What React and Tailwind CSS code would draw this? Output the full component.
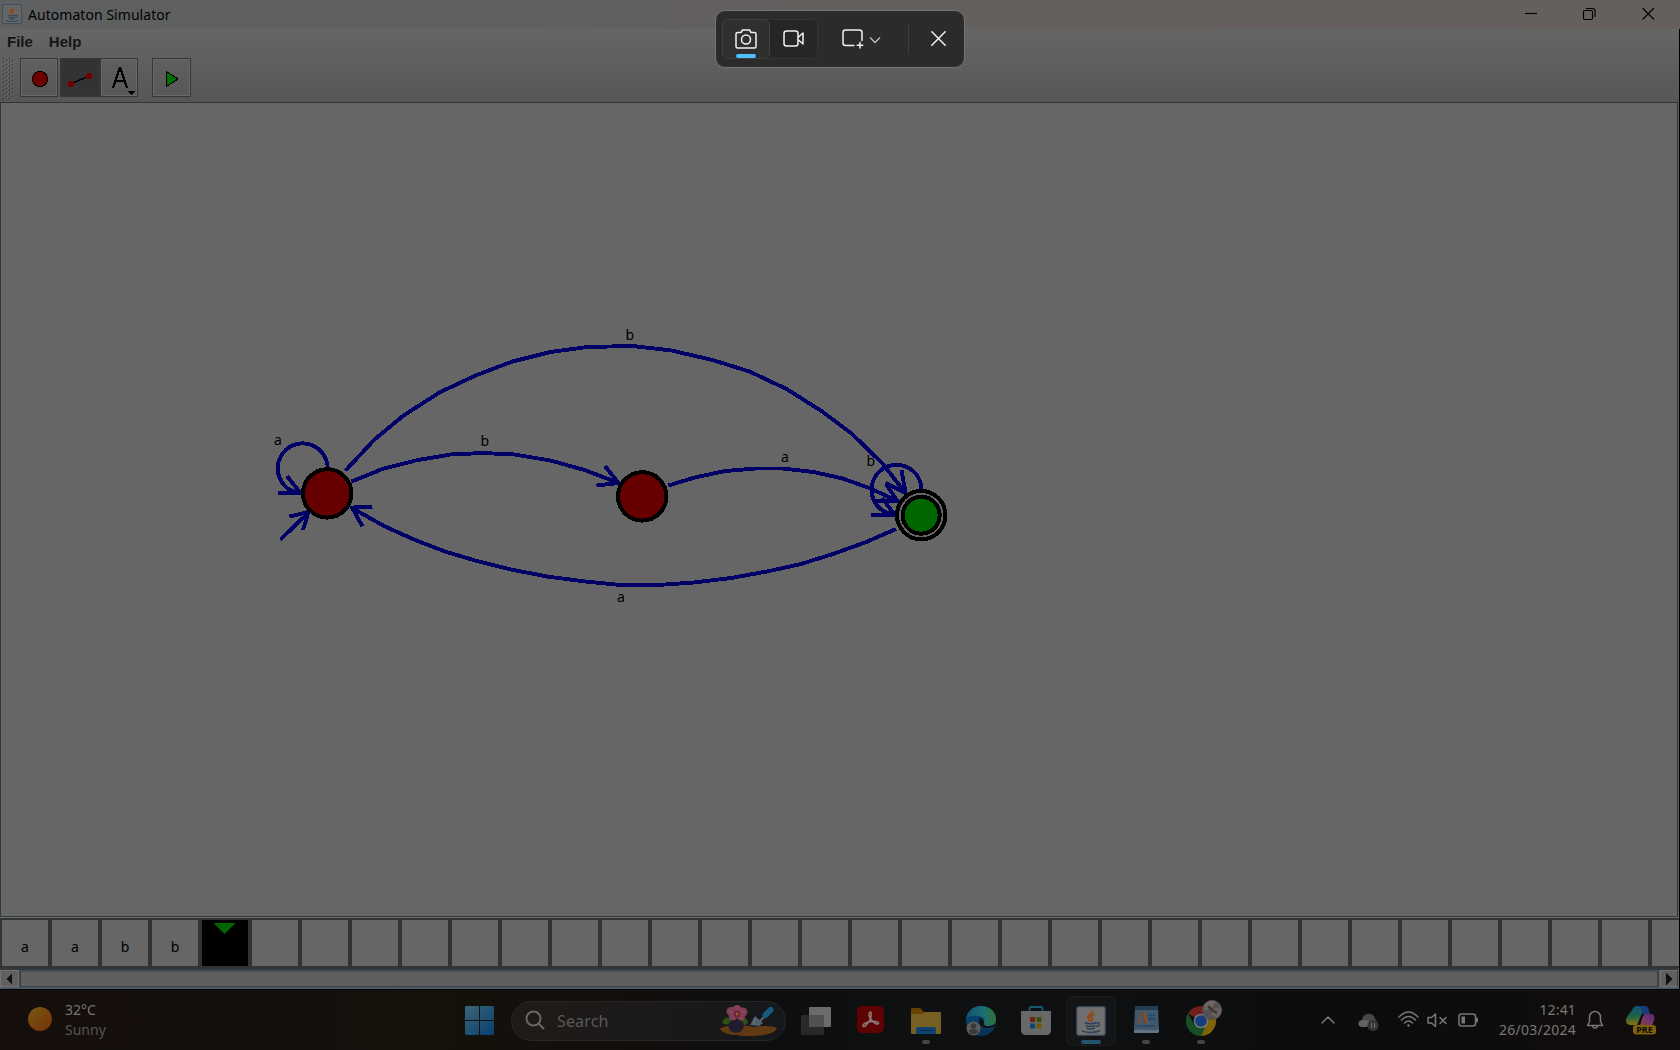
import React from "react";

const INK = "#000066";

const CURVES = [
  "345.5,470.5 374.5,439.5 403.5,415.5 439.5,392.5 475.5,375.5 512.5,361.5 550.5,352 587.5,347 632.5,346 671.5,350.5 712.5,360 749.5,371.5 786.5,389 821.5,411 851.5,433.5 882.5,463.5 905.5,493",
  "351.5,481.5 382.5,469 415.5,460.5 450.5,454.5 482.5,453 514.5,454.5 550.5,460.5 584.5,470 618.5,483",
  "668.5,485.5 696.5,477 725.5,471 755.5,468.5 782.5,468.5 813.5,472 842.5,478.5 870.5,488.5 897.5,501",
  "896,529 865,542.5 833,554 801,564 767,571.5 731,578 694,582.5 658,585 620,585 585,581.5 547,576.5 511,569.5 477,561 445,551.5 415,540 385,526.5 351,507.5",
];

const HEADS = [
  "605,466 618.5,483 596.5,485.5",
  "901.5,470 905.5,493 885.5,483",
  "886,484 897.5,501 875,501",
  "372.5,507 352,507.5 362.5,526.5",
  "278,493 300.5,493 287,476",
  "871,515 895,515 882,498",
  "289.5,516.5 308.5,512 303,530",
];

const LABELS = [
  ["b", 625.5, 340],
  ["a", 274, 445],
  ["b", 480.5, 446],
  ["a", 781, 462],
  ["b", 866.5, 466],
  ["a", 617, 602],
];

function Automaton() {
  return (
    <svg className="block" width="1676" height="813" viewBox="1 103 1676 813">
      <g fill="none" stroke={INK} strokeWidth="3.9" shapeRendering="crispEdges">
        {CURVES.map((p) => <polyline key={p} points={p} />)}
        {HEADS.map((p) => <polyline key={p} points={p} />)}
        <path d="M327.7 469A25 25 0 1 0 292 491L300 493" />
        <path d="M921.5 490A25 25 0 1 0 885 512L895 515" />
        <path d="M280.5 539.5L309 512" />
      </g>
      <g stroke="#000" strokeWidth="4" shapeRendering="crispEdges">
        <circle cx="327.2" cy="493.4" r="24.2" fill="#660000" />
        <circle cx="642.2" cy="496.4" r="24.2" fill="#660000" />
        <circle cx="921.2" cy="515.2" r="24.200" fill="#666666" />
        <circle cx="921.2" cy="515.2" r="18.500" fill="#006600" />
      </g>
      <g fontFamily="'Noto Sans', sans-serif" fontSize="14" fill="#000">
        {LABELS.map(([t, x, y]) => <text key={x} x={x} y={y}>{t}</text>)}
      </g>
    </svg>
  );
}

function JavaCup({ size, dim }) {
  return (
    <svg width={size} height={size} viewBox="0 0 30 30" className="block shrink-0">
      <rect x=".7" y=".7" width="28.6" height="28.6" rx="2" fill={dim ? "#666" : "#707070"} stroke="#34485a" strokeWidth="1.2" />
      <path d="M15.5 5c2 3-4.500 4-3.500 6.500 .4 1.600 2 2.500 2 4M18.500 8c-3.500 1.500-4.500 2.500-2.700 4.500 1 1.300 .2 2-.8 3" fill="none" stroke="#944512" strokeWidth="1.900" />
      <path d="M8.500 16.500c3 1.500 9 1.500 12 0M20.500 17c4-1.500 4 3-.5 3.500M9.500 19.500c3 1.300 7 1.300 10 0M10.500 22c2.500 1.200 6 1.200 8.500 0M6 24.500c3 2.500 14 2.500 18 0" fill="none" stroke="#2c4159" strokeWidth="1.500" />
    </svg>
  );
}

function TitleBar() {
  return (
    <div className="flex h-[29px] items-center bg-linear-to-r from-[#5e6061] via-[#64605e] via-60% to-[#655f5e] pl-[2px]">
      <div className="-mt-[2px]"><JavaCup size={20} dim /></div>
      <span className="ml-[6px] text-[14px] leading-[20px] tracking-[0.05px] text-black">Automaton Simulator</span>
      <svg className="-mt-[1px] ml-auto mr-[24px] block" width="132" height="16" viewBox="0 0 132 16" fill="none" stroke="#000" strokeWidth="1.100">
        <path d="M1 7.500H13" />
        <rect x="59.500" y="4.500" width="9" height="9" rx="1.200" />
        <path d="M62 2.500h6.500a2.500 2.500 0 0 1 2.500 2.500v6M118.500 2l11.500 11.500M130 2l-11.500 11.500" />
      </svg>
    </div>
  );
}

function ToolButton({ children, className }) {
  return <div className={`flex h-[39px] items-center justify-center border border-[#363636] ${className}`}>{children}</div>;
}

function Header() {
  return (
    <div className="flex h-[73px] flex-col bg-linear-to-b from-[#666666] to-[#565656]">
      <div className="flex h-[27px] items-center gap-[16px] pl-[7px] pb-[1px] font-['Liberation_Sans'] text-[15px] font-bold text-[#151515]">
        <span>File</span>
        <span>Help</span>
      </div>
      <div className="flex pt-[2px] pl-[2px]">
        <svg className="mr-[5px]" width="13" height="41" shapeRendering="crispEdges">
          <defs>
            <pattern id="grip" width="6" height="4" patternUnits="userSpaceOnUse">
              <path d="M1 0h1v1H1zM4 2h1v1H4z" fill="#2a2a2a" />
              <path d="M2 1h1v1H2zM5 3h1v1H5z" fill="#6c6c6c" />
            </pattern>
          </defs>
          <rect width="13" height="41" fill="url(#grip)" />
        </svg>
        <ToolButton className="w-[38px] shadow-[inset_0_0_0_1px_#686868]">
          <svg width="18" height="18" viewBox="0 0 18 18" shapeRendering="crispEdges" className="ml-[2px] mt-[2px]"><circle cx="9" cy="9" r="7.700" fill="#700000" stroke="#000" /></svg>
        </ToolButton>
        <ToolButton className="ml-[2px] w-[40px] border-2 border-[#2c2c2c] bg-[#333333]">
          <svg width="26" height="18" viewBox="0 0 26 18" shapeRendering="crispEdges" className="mt-[4px]">
            <path d="M3.500 13L22 5" stroke="#000" strokeWidth="1.400" />
            <circle cx="4" cy="13" r="3" fill="#700000" /><circle cx="22" cy="5" r="3" fill="#700000" />
          </svg>
        </ToolButton>
        <ToolButton className="w-[38px] shadow-[inset_0_0_0_1px_#686868]">
          <svg width="34" height="35" viewBox="0 0 34 35" shapeRendering="crispEdges">
            <path d="M11 28L17.500 8.500h1L25 28M13.500 21H23" fill="none" stroke="#000" strokeWidth="2.400" />
            <path d="M25 31h9l-4.500 4z" fill="#000" />
          </svg>
        </ToolButton>
        <ToolButton className="ml-[14px] w-[39px] shadow-[inset_0_0_0_1px_#686868]">
          <svg width="14" height="18" viewBox="0 0 14 18" shapeRendering="crispEdges" className="ml-[1px] mt-[2px]"><path d="M1.500 1.500v15L13 9z" fill="#007000" stroke="#000" /></svg>
        </ToolButton>
      </div>
    </div>
  );
}

const CELLS = Array.from({ length: 34 }, (_, i) => ["a", "a", "b", "b"][i] || "");

function Tape() {
  return (
    <div className="flex h-[50px] w-[1679px] gap-[4px] overflow-hidden bg-[#333333] pl-[2px] pt-[2px]">
      {CELLS.map((c, i) =>
        i === 4 ? (
          <div key={i} className="flex h-[46px] w-[46px] shrink-0 justify-center bg-black pr-[2px] pt-[3px]">
            <svg width="22" height="12" viewBox="0 0 22 12" shapeRendering="crispEdges"><path d="M0 0h22L11 11z" fill="#006600" /></svg>
          </div>
        ) : (
          <div key={i} className="h-[46px] w-[46px] shrink-0 bg-[#666666] pt-[17px] text-center text-[14px] leading-[19px] text-black">{c}</div>
        )
      )}
    </div>
  );
}

function ScrollBar() {
  return (
    <div className="flex h-[21px] w-[1678px] border-t-2 border-b-[2px] border-t-[#33383d] border-b-[#505a66] bg-[#5f5f5f]">
      <div className="flex w-[19px] items-center justify-center border border-[#737373] bg-[#606060] pr-[1px]">
        <svg width="6" height="12" viewBox="0 0 6 12" shapeRendering="crispEdges"><path d="M6 0v12L0 6z" fill="#111" /></svg>
      </div>
      <div className="mr-[1px] flex-1 border-2 border-b border-[#3b4148] border-t-[#454e59] border-l-[#3b4148]" />
      <div className="flex w-[18px] items-center justify-center border border-[#737373] border-r-[#3b4148] bg-[#606060]">
        <svg width="6" height="12" viewBox="0 0 6 12" shapeRendering="crispEdges"><path d="M0 0v12L6 6z" fill="#111" /></svg>
      </div>
    </div>
  );
}

function StartIcon() {
  return (
    <svg width="29" height="29" viewBox="0 0 29 29" className="block">
      <defs><linearGradient id="win" x1="0" y1="0" x2="1" y2="1"><stop stopColor="#3b6676" /><stop offset="1" stopColor="#063f70" /></linearGradient></defs>
      <path d="M1 0h13v14H0V1zM15 0h13l1 1v13H15zM0 15h14v14H1L0 28zM15 15h14v13l-1 1H15z" fill="url(#win)" />
    </svg>
  );
}

function GardenArt() {
  return (
    <svg width="60" height="32" viewBox="0 0 60 32" className="block">
      <path d="M1 24c3-4 24-5 34-2 8-2 20-1 23 1-2 6-15 8-28 8S3 29 1 24z" fill="#613a13" />
      <path d="M3 18c2-7 8-7 10-1-2 3-7 3-10 1zM21 17c2-6 6-5 8 0-1 4-6 4-8 0z" fill="#315019" />
      <path d="M11 16h12c4 5 0 10-2 11-3 1-6 1-8 0-3-2-5-6-2-11z" fill="#211d2e" />
      <g fill="#7d3f53">
        <circle cx="12" cy="6.500" r="4.500" /><circle cx="18" cy="4.500" r="4.500" /><circle cx="24" cy="7" r="4.500" /><circle cx="14" cy="11.500" r="4" /><circle cx="22" cy="11.500" r="4" />
      </g>
      <g stroke="#8f5566" strokeWidth=".8"><path d="M18 9l-8-3M18 9V1M18 9l8-3M18 9l-5 5M18 9l5 5" /></g>
      <circle cx="18" cy="9" r="3.500" fill="#712238" /><circle cx="18" cy="9" r="1.400" fill="#8d642c" />
      <path d="M36 11l8 7-4 3-9-1z" fill="#536069" /><path d="M36 13l-2 6" stroke="#6f7a80" /><path d="M41 16l7-7" stroke="#59666e" strokeWidth="2" />
      <path d="M46.500 10l5-5" stroke="#165a80" strokeWidth="6" strokeLinecap="round" />
    </svg>
  );
}

function TaskViewIcon() {
  return <svg width="30" height="28" viewBox="0 0 30 28"><rect y="8" width="23" height="20" rx="1.500" fill="#292929" /><rect x="8" width="22" height="20" rx="1" fill="#6b6b6b" /><path d="M8 8h15v12H8z" fill="#505050" /></svg>;
}

function AcrobatIcon() {
  return (
    <svg width="27" height="27" viewBox="0 0 27 27" className="mr-[1px]">
      <rect width="27" height="27" rx="5" fill="#5e0202" />
      <path d="M12.500 6.500c2.500-2.500 2 4.500 0 8-2.500 4.500-6.500 8-6.500 5 0-2.500 9-5 13-4 4.500 1 2.500 3.500-.5 2-4-2-7.500-7-6-11z" fill="none" stroke="#8d7d7d" strokeWidth="1.500" />
    </svg>
  );
}

function FolderIcon() {
  return (
    <svg width="30" height="27" viewBox="0 0 30 27">
      <path d="M0 1q0-1 1-1h8l4 4h16v8H0z" fill="#654400" />
      <path d="M0 6h11l3-2h15q1 0 1 1v20q0 1-1 1H1q-1 0-1-1z" fill="#776021" />
      <path d="M5 26v-5q0-2 2-2h16q2 0 2 2v5z" fill="#0c4471" /><path d="M9 22.500h12" stroke="#082b4c" />
    </svg>
  );
}

function EdgeIcon() {
  return (
    <svg width="30" height="30" viewBox="0 0 30 30">
      <defs><linearGradient id="edg"><stop stopColor="#14527a" /><stop offset=".6" stopColor="#1c6f71" /><stop offset="1" stopColor="#327038" /></linearGradient></defs>
      <circle cx="15" cy="15" r="15" fill="#083f6b" />
      <path d="M0 14C1 5 7 0 15 0c9 0 15 6 15 13 0 5-4 7-8 7-3 0-5-1-4-3 2-3-1-7-6-7C6 9 2 10 0 14z" fill="url(#edg)" />
      <path d="M12 17c0 5 5 7 10 6 3 0 5-2 6-2-3 6-9 9-13 9-5-2-6-8-3-13z" fill="#0a3156" />
      <path d="M14 12c4 1 4 4 4 6 1 3 6 3 11 0v2c-5 3-11 3-14 0-2-2-3-5-1-8z" fill="#101214" />
      <circle cx="7.500" cy="22.500" r="7" fill="#5c5c5c" /><circle cx="7.500" cy="20" r="2.800" fill="#3a3a3a" /><path d="M3 26c0-4 9-4 9 0-2 3-7 3-9 0z" fill="#3a3a3a" />
    </svg>
  );
}

function StoreIcon() {
  return (
    <svg width="30" height="30" viewBox="0 0 30 30">
      <path d="M8.500 6V2q0-1 1-1h11q1 0 1 1v4" fill="none" stroke="#155673" strokeWidth="1.800" />
      <path d="M1 5h28q1 0 1 1v18q0 5-5 5H5q-5 0-5-5V6q0-1 1-1z" fill="#686868" />
      <path d="M9 11h5v5H9z" fill="#742313" /><path d="M15.500 11h5v5h-5z" fill="#355007" /><path d="M9 17.500h5v5H9z" fill="#05486a" /><path d="M15.500 17.500h5v5h-5z" fill="#765305" />
    </svg>
  );
}

function WordpadIcon() {
  return (
    <svg width="26" height="28" viewBox="0 0 26 28" className="ml-[1px]">
      <path d="M1 1h23l1 24q0 2-2 2H1q-1 0-1-2z" fill="#41586a" /><path d="M1 0h23v4H1z" fill="#203e52" /><path d="M0 24h25v2q-1 1-2 1H1q-1 0-1-1z" fill="#667481" />
      <text x="3" y="17" fontFamily="'Liberation Serif', serif" fontWeight="bold" fontSize="16" fill="#8b4a1a">A</text>
      <path d="M14 9.500h7M14 13h7M3 20h18" stroke="#22456b" strokeWidth="1.500" />
    </svg>
  );
}

function ChromeIcon() {
  return (
    <svg width="36" height="36" viewBox="0 0 36 36">
      <path d="M15 21L2 13.500A15 15 0 0 1 28 13.500z" fill="#711f19" />
      <path d="M15 21L28 13.500A15 15 0 0 1 15 36z" fill="#7e6308" />
      <path d="M2 13.500l7 12L15 28l4 0-4 8A15 15 0 0 1 2 13.500z" fill="#164f27" />
      <circle cx="15" cy="21" r="7.300" fill="#777" /><circle cx="15" cy="21" r="5.800" fill="#173f80" />
      <circle cx="26" cy="10" r="10" fill="#565150" />
      <path d="M19 4c4-4 8-4 11-2l-5 7-7 1z" fill="#6d6866" /><path d="M27 9l8-2c1 4 0 8-4 11l-6-3z" fill="#666160" />
      <path d="M22 6l4 4 5 3" fill="none" stroke="#43352f" strokeWidth="2.500" />
    </svg>
  );
}

function TaskButton({ children, dot, active }) {
  return (
    <div className={`flex h-[50px] w-[50px] shrink-0 flex-col items-center rounded-[5px] ${active ? "bg-[#141516] ring-1 ring-[#1b1c1d] ring-inset" : ""}`}>
      <div className="flex h-[45px] shrink-0 flex-col items-center pt-[10px]">{children}</div>
      {dot && <div className={`-mt-px h-[4px] rounded-full ${active ? "w-[20px] bg-[#22536f]" : "w-[8px] bg-[#444]"}`} />}
    </div>
  );
}

function Tray() {
  const s = { fill: "none", stroke: "#777", strokeWidth: 1.5, strokeLinecap: "round", strokeLinejoin: "round" };
  return (
    <div className="ml-auto flex h-full items-center pr-[23px]">
      <svg className="-mt-[2px] mr-[23px]" width="14" height="8" viewBox="0 0 14 8" {...s}><path d="M1 7l6-6 6 6" /></svg>
      <svg className="mr-[19px] mt-[2px]" width="21" height="18" viewBox="0 0 21 18">
        <path d="M1 13c-2-3 0-6 3-6 1-8 12-8 13-1 3 2 2 6 0 8H4z" fill="#484848" /><path d="M5 7c3-1 6 2 8 2l-5 5H3c-4-2-2-7 2-7z" fill="#626262" />
        <circle cx="15" cy="12.500" r="5.500" fill="#353535" /><path d="M13.500 10v5M16.500 10v5" stroke="#777" />
      </svg>
      <svg className="-mt-[2px] mr-[8px]" width="21" height="17" viewBox="0 0 21 17" {...s}><path d="M1 6q9.500-10 19 0M3.500 9q7-7 14 0M6.500 12q4-4 8 0" /><circle cx="10.500" cy="14.500" r="1.200" fill="#777" stroke="none" /></svg>
      <svg className="-mt-[2px] mr-[11px]" width="20" height="16" viewBox="0 0 20 16" {...s}><path d="M1 5.500h3.500L8.500 2v12.500L4.500 11H1zM13 5.500l6 6M19 5.500l-6 6" /></svg>
      <svg className="-mt-[1px]" width="21" height="14" viewBox="0 0 21 14" {...s}><rect x="1" y="1" width="16.500" height="12" rx="2.500" /><path d="M3.500 3.500h3.500v7H3.500z" fill="#777" stroke="none" /><path d="M19 5.500v3" strokeWidth="2" /></svg>
      <div className="-mt-[1px] flex w-[97px] flex-col items-end text-[14px] leading-[20px] text-[#777]">
        <span className="tracking-[0.15px]">12:41</span>
        <span className="whitespace-nowrap tracking-[0.25px]">26/03/2024</span>
      </div>
      <svg className="-mt-[2px] ml-[10px] mr-[22px]" width="18" height="20" viewBox="0 0 18 20" {...s}><path d="M1.500 15.500l2-4V7a5.500 5.500 0 0 1 11 0v4.500l2 4zM6.500 16c1 3 4 3 5 0" /></svg>
      <svg width="31" height="30" viewBox="0 0 31 30">
        <defs>
          <linearGradient id="ca" x1="0" y1="0" x2="0" y2="1"><stop stopColor="#0d5477" /><stop offset=".5" stopColor="#1b6146" /><stop offset="1" stopColor="#867112" /></linearGradient>
          <linearGradient id="cb" x1="0" y1="1" x2="1" y2="0"><stop stopColor="#87472f" /><stop offset=".5" stopColor="#7a3468" /><stop offset="1" stopColor="#522d7b" /></linearGradient>
        </defs>
        <path d="M6 4q1.500-4 5-4h9l-6 15q-1 4-4 4H5c-5 0-6-4-4-8z" fill="url(#ca)" />
        <path d="M13 0h6q3 0 4 4l1 4h-5q-3 0-4 4l-2 4 3-10q1-3-3-6z" fill="#163b79" />
        <path d="M19 8h6c3 0 4 3 3 6l-2 6-5 2h-8l3-10q1-4 3-4z" fill="url(#cb)" />
        <path d="M16 8h3q-2 1-3 4l-2 7h-3z" fill="#0d0c0c" />
        <rect x="7" y="19" width="23" height="9.500" rx="3" fill="#806108" />
        <text x="18.500" y="27" textAnchor="middle" fontFamily="'Noto Sans', sans-serif" fontWeight="bold" fontSize="9" fill="#0b0b0b">PRE</text>
      </svg>
    </div>
  );
}

function TaskBar() {
  return (
    <div className="flex h-[60px] items-center overflow-hidden bg-[linear-gradient(90deg,#150e0b_0,#15100b_20%,#14110b_27%,#130e0c_37%,#0d0e10_46%,#0e1012_55%,#0e0f10_68%,#0c0c0c_78%,#110d0c_100%)] border-t border-[#141414]">
      <div className="flex w-[465px] items-center pl-[28px]">
        <div className="mt-[-3px] size-[24px] rounded-full bg-linear-to-br from-[#775712] to-[#74300a]" />
        <div className="-mt-[1px] ml-[13px] flex flex-col text-[14px] leading-[20px]">
          <span className="text-[#777]">32°C</span>
          <span className="text-[#555]">Sunny</span>
        </div>
      </div>
      <StartIcon />
      <div className="ml-[17px] flex h-[40px] w-[275px] items-center rounded-full border border-[#292725] bg-linear-to-r from-[#1e1b18] via-[#1b1919] to-[#15171a] pl-[13px] pr-[6px]">
        <svg className="-mt-[1px]" width="20" height="20" viewBox="0 0 20 20" fill="none" stroke="#666" strokeWidth="2" strokeLinecap="round"><circle cx="8.500" cy="8.500" r="7" /><path d="M13.500 13.500l5 5" /></svg>
        <span className="ml-[12px] text-[16px] tracking-[0.15px] text-[#595959]">Search</span>
        <div className="ml-auto"><GardenArt /></div>
      </div>
      <div className="ml-[5px] flex gap-[5px]">
        <TaskButton><div className="mt-px"><TaskViewIcon /></div></TaskButton>
        <TaskButton><AcrobatIcon /></TaskButton>
        <TaskButton dot><div className="mt-[2px]"><FolderIcon /></div></TaskButton>
        <TaskButton><EdgeIcon /></TaskButton>
        <TaskButton><StoreIcon /></TaskButton>
        <TaskButton dot active><JavaCup size={30} /></TaskButton>
        <TaskButton dot><WordpadIcon /></TaskButton>
        <TaskButton dot><div className="mt-[-6px] ml-[6px]"><ChromeIcon /></div></TaskButton>
      </div>
      <Tray />
    </div>
  );
}

function SnipBar() {
  const s = { fill: "none", stroke: "#f2f2f2", strokeWidth: 1.5, strokeLinejoin: "round", strokeLinecap: "round" };
  return (
    <div className="absolute left-[715px] top-[10px] flex h-[58px] w-[250px] items-center rounded-[10px] border border-[#777574] bg-[#2b2b2b] pb-px pl-[6px]">
      <div className="flex h-[40px] w-[96px] rounded-[6px] border border-[#343434] bg-[#262626]">
        <div className="ml-[-1px] mt-[-1px] flex h-[40px] w-[48px] flex-col items-center rounded-[6px] border border-[#404040] bg-[#2f2f2f] pt-[9px]">
          <svg className="shrink-0" width="22" height="20" viewBox="0 0 22 20" {...s}><path d="M2.500 3.500h3.500l1.500-2.500h7L16 3.500h3.500q1.500 0 1.500 1.500v12.500q0 1.500-1.500 1.500h-17Q1 19 1 17.500V5q0-1.500 1.500-1.500z" /><circle cx="11" cy="10.500" r="4.500" /></svg>
          <div className="mt-[5px] h-[4px] w-[20px] shrink-0 rounded-full bg-[#4cc2ff]" />
        </div>
        <svg className="ml-[13px] mt-[10px]" width="22" height="17" viewBox="0 0 22 17" {...s}><rect x="1" y="1" width="14" height="15" rx="2.500" /><path d="M15.500 7l4.500-4v11l-4.500-4" /></svg>
      </div>
      <svg className="ml-[24px]" width="22" height="20" viewBox="0 0 22 20" {...s}><path d="M12 16.500H3.500Q1 16.500 1 14V3.500Q1 1 3.500 1h14Q20 1 20 3.500v8M18 13.500v5.500M15.200 16.200h5.600" /></svg>
      <svg className="ml-[5px] mt-[2px]" width="12" height="8" viewBox="0 0 12 8" fill="none" stroke="#bbb" strokeWidth="1.400"><path d="M1 1.500l5 5 5-5" /></svg>
      <div className="ml-[27px] h-[30px] w-px bg-[#3d3d3d]" />
      <svg className="ml-[22px]" width="15" height="15" viewBox="0 0 15 15" {...s}><path d="M.8 .8l13.400 13.400M14.200 .8L.8 14.200" /></svg>
    </div>
  );
}

export default function App() {
  return (
    <div className="relative h-[1050px] w-[1680px] overflow-hidden bg-[#0c0c0c] font-['Noto_Sans',sans-serif]">
      <TitleBar />
      <div className="flex h-[960px] flex-col border-r border-black bg-[#5f5f5f]">
        <Header />
        <div className="h-[815px] w-[1678px] border border-[#30383f] bg-[#666666]"><Automaton /></div>
        <div className="h-px bg-[#6d7073]" />
        <Tape />
        <ScrollBar />
      </div>
      <div className="h-px bg-black" />
      <TaskBar />
      <SnipBar />
    </div>
  );
}
